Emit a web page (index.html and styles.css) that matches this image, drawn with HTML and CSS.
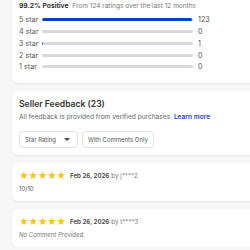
FILE: index.html
```html
<!DOCTYPE html>
<html lang="en">
<head>
  <meta charset="UTF-8">
  <meta name="viewport" content="width=device-width, initial-scale=1.0">
  <title>Seller Feedback</title>
  <link rel="stylesheet" href="styles.css">
</head>
<body>

<div class="page">
  <!-- Ratings summary -->
  <section class="card summary">
    <div class="summary-head">
      <strong>99.2% Positive</strong>
      <span>From 124 ratings over the last 12 months</span>
    </div>
    <div class="bar-row">
      <span class="bar-label">5 star</span>
      <div class="bar"><div class="bar-fill" style="width: 99.2%"></div></div>
      <span class="bar-count">123</span>
    </div>
    <div class="bar-row">
      <span class="bar-label">4 star</span>
      <div class="bar"><div class="bar-fill" style="width: 0%"></div></div>
      <span class="bar-count">0</span>
    </div>
    <div class="bar-row">
      <span class="bar-label">3 star</span>
      <div class="bar"><div class="bar-fill" style="width: 0.8%"></div></div>
      <span class="bar-count">1</span>
    </div>
    <div class="bar-row">
      <span class="bar-label">2 star</span>
      <div class="bar"><div class="bar-fill" style="width: 0%"></div></div>
      <span class="bar-count">0</span>
    </div>
    <div class="bar-row">
      <span class="bar-label">1 star</span>
      <div class="bar"><div class="bar-fill" style="width: 0%"></div></div>
      <span class="bar-count">0</span>
    </div>
  </section>

  <!-- Feedback header -->
  <section class="card feedback-head">
    <h2>Seller Feedback (23)</h2>
    <p class="note">All feedback is provided from verified purchases. <a href="#">Learn more</a></p>
    <div class="filters">
      <button class="filter select">Star Rating <span class="caret"></span></button>
      <button class="filter">With Comments Only</button>
    </div>
  </section>

  <!-- Reviews -->
  <section class="card review">
    <div class="review-head">
      <span class="stars">★★★★★</span>
      <span class="date">Feb 26, 2026</span>
      <span class="by">by j****2</span>
    </div>
    <p class="comment">10/10</p>
  </section>

  <section class="card review">
    <div class="review-head">
      <span class="stars">★★★★★</span>
      <span class="date">Feb 26, 2026</span>
      <span class="by">by t****3</span>
    </div>
    <p class="comment empty">No Comment Provided.</p>
  </section>
</div>

</body>
</html>
```

FILE: styles.css
```css
body {
  font-family: 'Inter', 'Noto Sans', sans-serif;
  background-color: #f7f7f8;
  margin: 0;
  padding: 0;
  overflow: hidden;
  color: #333;
}

.page {
  width: 300px;
  margin-top: -10px;
  padding-left: 12px;
  display: flex;
  flex-direction: column;
  gap: 8px;
}

.card {
  background-color: #fff;
  border-radius: 6px;
  box-shadow: 0 1px 2px rgba(0, 0, 0, 0.08);
  padding: 8px 7px 7px;
}

/* summary */
.summary {
  padding-top: 11px;
  padding-bottom: 10px;
}

.summary-head {
  font-size: 6.5px;
  line-height: 10px;
  margin-bottom: 3px;
}

.summary-head strong {
  font-weight: 600;
  font-size: 6.8px;
  color: #222;
  margin-right: 2px;
}

.summary-head span {
  color: #777;
}

.bar-row {
  display: flex;
  align-items: center;
  height: 11.75px;
  font-size: 7.2px;
  color: #555;
}

.bar-label {
  width: 23px;
}

.bar {
  width: 151px;
  height: 3px;
  background-color: #d7d9de;
  border-radius: 2px;
  overflow: hidden;
}

.bar-fill {
  height: 100%;
  background-color: #0b3ecf;
  border-radius: 2px;
}

.bar-count {
  margin-left: 5px;
}

/* feedback header */
.feedback-head {
  padding-top: 6px;
}

.feedback-head h2 {
  margin: 0;
  font-size: 8.6px;
  line-height: 14px;
  font-weight: 600;
  color: #333;
}

.note {
  margin: 1px 0 0;
  font-size: 6.6px;
  line-height: 10px;
  color: #666;
}

.note a {
  color: #2e45c4;
  font-weight: 600;
  text-decoration: none;
}

.filters {
  display: flex;
  gap: 4px;
  margin-top: 9px;
}

.filter {
  height: 17px;
  padding: 0 5px;
  border: 1px solid #e3e3e3;
  border-radius: 4px;
  background-color: #fff;
  font-family: inherit;
  font-size: 6px;
  color: #555;
  display: flex;
  align-items: center;
}

.select {
  width: 59px;
  justify-content: space-between;
}

.caret {
  width: 0;
  height: 0;
  margin-right: 2px;
  border-left: 3px solid transparent;
  border-right: 3px solid transparent;
  border-top: 3px solid #444;
}

/* reviews */
.review-head {
  display: flex;
  align-items: center;
  height: 9px;
  font-size: 6.2px;
}

.stars {
  color: #f2c519;
  font-size: 9.5px;
  letter-spacing: -0.6px;
  width: 51px;
}

.date {
  font-weight: 600;
  color: #444;
  margin-right: 2px;
}

.by {
  color: #777;
}

.comment {
  margin: 4px 0 0;
  font-size: 6px;
  line-height: 10px;
  color: #555;
}

.empty {
  font-style: italic;
  color: #777;
}
```
